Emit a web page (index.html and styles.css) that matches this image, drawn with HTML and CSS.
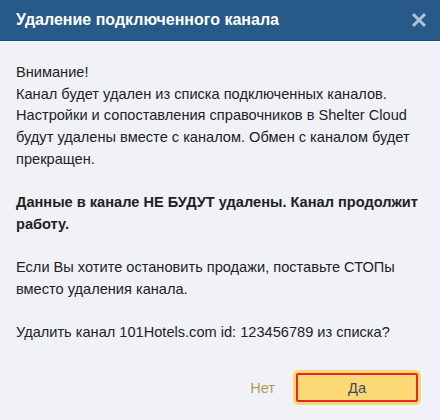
FILE: index.html
```html
<!DOCTYPE html>
<html lang="ru">

<head>
    <meta charset="UTF-8">
    <title>Удаление подключенного канала</title>
    <link rel="stylesheet" href="styles.css">
</head>

<body>
    <div class="dialog">
        <div class="dialog-header">
            <h2>Удаление подключенного канала</h2>
            <button class="close" type="button" aria-label="Закрыть">
                <svg width="16" height="16" viewBox="0 0 16 16">
                    <path d="M2 2L14 14M14 2L2 14" stroke="#b4c2d4" stroke-width="3" />
                </svg>
            </button>
        </div>
        <div class="dialog-body">
            <p>Внимание!<br>Канал будет удален из списка подключенных каналов. Настройки и сопоставления справочников в Shelter Cloud будут удалены вместе с каналом. Обмен с каналом будет прекращен.</p>
            <p class="strong">Данные в канале НЕ БУДУТ удалены. Канал продолжит работу.</p>
            <p>Если Вы хотите остановить продажи, поставьте СТОПы вместо удаления канала.</p>
            <p>Удалить канал 101Hotels.com id: 123456789 из списка?</p>
        </div>
        <div class="dialog-footer">
            <button class="btn-no" type="button">Нет</button>
            <button class="btn-yes" type="button">Да</button>
        </div>
    </div>
</body>

</html>
```

FILE: styles.css
```css
body {
    margin: 0;
    background-color: #f0f2f7;
    font-family: "Liberation Sans", Arial, sans-serif;
    color: #222;
}

.dialog {
    width: 440px;
    height: 420px;
    display: flex;
    flex-direction: column;
}

.dialog-header {
    height: 40px;
    background-color: #275a89;
    border-bottom: 1px solid #1d4a75;
    display: flex;
    align-items: center;
    justify-content: space-between;
    padding: 0 13px 0 16px;
}

.dialog-header h2 {
    margin: 0;
    font-size: 16px;
    font-weight: bold;
    color: #fff;
}

.close {
    background: none;
    border: none;
    padding: 0;
    width: 16px;
    height: 16px;
    cursor: pointer;
}

.close svg {
    display: block;
}

.dialog-body {
    padding: 21px 16px 0;
    font-size: 14.6px;
    line-height: 21.7px;
}

.dialog-body p {
    margin: 0 0 21.7px;
}

.strong {
    font-weight: bold;
}

.dialog-footer {
    display: flex;
    justify-content: flex-end;
    align-items: center;
    gap: 21px;
    padding: 0 22px 0 0;
    margin-top: auto;
    margin-bottom: 18px;
}

.btn-no {
    background: none;
    border: none;
    font-family: inherit;
    font-size: 14.6px;
    color: #b09a52;
    padding: 0;
    cursor: pointer;
}

.btn-yes {
    width: 122px;
    height: 29px;
    background-color: #fcd975;
    border: 2px solid #e82630;
    box-shadow: 0 0 0 3px #fcd975;
    border-radius: 2px;
    font-family: inherit;
    font-size: 14.6px;
    color: #3d4a5c;
    cursor: pointer;
}
```
